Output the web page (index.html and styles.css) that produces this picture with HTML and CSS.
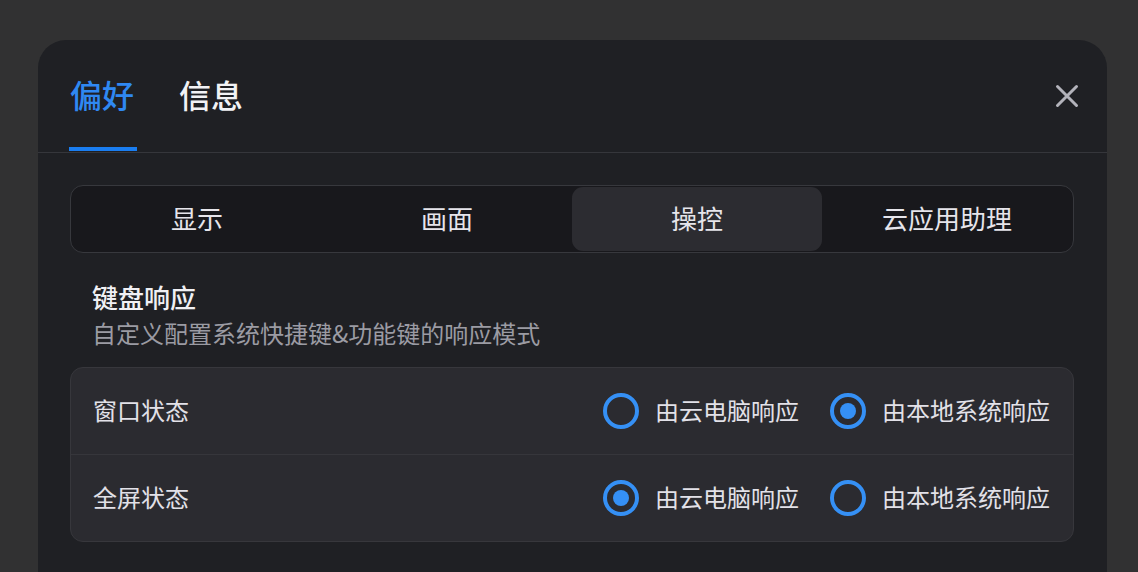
FILE: index.html
```html
<!DOCTYPE html>
<html lang="zh-CN">
<head>
<meta charset="utf-8">
<title>偏好设置</title>
<link rel="stylesheet" href="styles.css">
</head>
<body>
<div class="modal">
  <div class="header">
    <div class="tabs">
      <div class="tab active">偏好</div>
      <div class="tab">信息</div>
    </div>
    <button class="close" aria-label="关闭">
      <svg width="24" height="24" viewBox="0 0 24 24"><path d="M2.5 2.5 L21.5 21.5 M21.5 2.5 L2.5 21.5" stroke="#b3b3bb" stroke-width="3" stroke-linecap="round" fill="none"/></svg>
    </button>
  </div>
  <div class="body">
    <div class="segmented">
      <div class="seg">显示</div>
      <div class="seg">画面</div>
      <div class="seg active">操控</div>
      <div class="seg">云应用助理</div>
    </div>
    <div class="section-title">键盘响应</div>
    <div class="section-desc">自定义配置系统快捷键&amp;功能键的响应模式</div>
    <div class="card">
      <div class="row">
        <div class="row-label">窗口状态</div>
        <div class="options">
          <div class="option"><span class="radio"></span><span>由云电脑响应</span></div>
          <div class="option"><span class="radio checked"></span><span>由本地系统响应</span></div>
        </div>
      </div>
      <div class="row">
        <div class="row-label">全屏状态</div>
        <div class="options">
          <div class="option"><span class="radio checked"></span><span>由云电脑响应</span></div>
          <div class="option"><span class="radio"></span><span>由本地系统响应</span></div>
        </div>
      </div>
    </div>
  </div>
</div>
</body>
</html>
```
FILE: styles.css
```css
html, body {
  margin: 0;
  padding: 0;
  height: 100%;
  overflow: hidden;
}
body {
  background: #313132;
  font-family: "Noto Sans CJK SC", "Noto Sans", sans-serif;
  padding: 40px 0 0 38px;
  box-sizing: border-box;
}
.modal {
  width: 1069px;
  height: 532px;
  background: #1f2024;
  border-radius: 28px 28px 0 0;
}
.header {
  height: 112px;
  border-bottom: 1px solid #35363b;
  display: flex;
  align-items: stretch;
  justify-content: space-between;
  padding: 0 28px 0 31px;
}
.tabs {
  display: flex;
  gap: 43px;
}
.tab {
  position: relative;
  display: flex;
  align-items: center;
  padding: 0 1px 4px 1px;
  font-size: 32px;
  font-weight: 500;
  color: #f2f2f5;
}
.tab.active {
  color: #2f88f2;
}
.tab.active::after {
  content: "";
  position: absolute;
  left: 0;
  right: -2px;
  bottom: 1px;
  height: 4px;
  background: #1a7df0;
}
.close {
  align-self: center;
  background: none;
  border: 0;
  padding: 0;
  width: 24px;
  height: 24px;
  display: flex;
}
.body {
  padding: 32px 33px 0 32px;
}
.segmented {
  display: grid;
  grid-template-columns: repeat(4, 1fr);
  height: 64px;
  padding: 1px;
  border: 1px solid #37383d;
  border-radius: 13px;
  background: #18181c;
}
.seg {
  display: flex;
  align-items: center;
  justify-content: center;
  padding-bottom: 4px;
  font-size: 26px;
  font-weight: 400;
  color: #e6e5eb;
  border-radius: 11px;
}
.seg.active {
  background: #2c2c31;
}
.section-title {
  margin-top: 26px;
  padding-left: 22px;
  font-size: 26px;
  line-height: 36px;
  font-weight: 500;
  color: #f0f0f4;
}
.section-desc {
  margin-top: 1px;
  padding-left: 22px;
  font-size: 24px;
  line-height: 34px;
  color: #9b9ba3;
}
.card {
  margin-top: 17px;
  border: 1px solid #37373c;
  border-radius: 13px;
  background: #2b2b30;
}
.row {
  height: 86px;
  display: flex;
  align-items: center;
  justify-content: space-between;
  padding: 0 23px 0 22px;
}
.row + .row {
  border-top: 1px solid #36363b;
}
.row-label {
  font-size: 24px;
  line-height: 30px;
  padding-bottom: 3px;
  color: #e2e1e8;
}
.options {
  display: flex;
  gap: 31px;
}
.option {
  display: flex;
  align-items: center;
  gap: 16px;
  font-size: 24px;
  color: #e2e1e8;
}
.option span:last-child {
  line-height: 30px;
  padding-bottom: 3px;
}
.radio {
  width: 36px;
  height: 36px;
  box-sizing: border-box;
  border: 4px solid #3590f5;
  border-radius: 50%;
  display: flex;
  align-items: center;
  justify-content: center;
}
.radio.checked::after {
  content: "";
  width: 16px;
  height: 16px;
  border-radius: 50%;
  background: #3590f5;
}
```
